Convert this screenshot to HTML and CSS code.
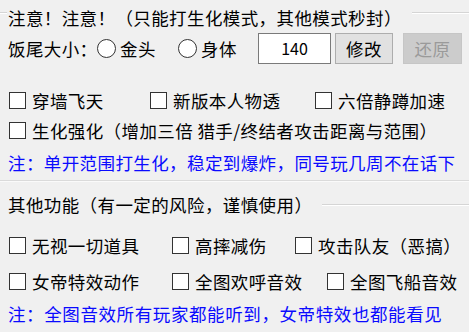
FILE: index.html
```html
<!DOCTYPE html>
<html lang="zh">
<head>
<meta charset="utf-8">
<link rel="stylesheet" href="styles.css">
</head>
<body>
<div class="panel">
  <div class="group-title first">
    <i class="rule stub"></i>
    <span class="title-text">注意！注意！（只能打生化模式，其他模式秒封）</span>
    <i class="rule grow"></i>
  </div>

  <div class="row size-row">
    <span class="label">饭尾大小：</span>
    <label class="radio r1"><span class="circle"></span>金头</label>
    <label class="radio r2"><span class="circle"></span>身体</label>
    <div class="input">140</div>
    <div class="btn">修改</div>
    <div class="btn disabled">还原</div>
  </div>

  <div class="row grid cols-a gap-top">
    <label class="check"><span class="box"></span>穿墙飞天</label>
    <label class="check"><span class="box"></span>新版本人物透</label>
    <label class="check"><span class="box"></span>六倍静蹲加速</label>
  </div>
  <div class="row">
    <label class="check"><span class="box"></span>生化强化（增加三倍 猎手/终结者攻击距离与范围）</label>
  </div>
  <div class="row note note-one">注：单开范围打生化，稳定到爆炸，同号玩几周不在话下</div>

  <div class="separator"></div>

  <div class="group-title second">
    <span class="title-text">其他功能（有一定的风险，谨慎使用）</span>
    <i class="rule grow"></i>
  </div>

  <div class="row grid cols-b gap-mid">
    <label class="check"><span class="box"></span>无视一切道具</label>
    <label class="check"><span class="box"></span>高摔减伤</label>
    <label class="check"><span class="box"></span>攻击队友（恶搞）</label>
  </div>
  <div class="row grid cols-c gap-mid2">
    <label class="check"><span class="box"></span>女帝特效动作</label>
    <label class="check"><span class="box"></span>全图欢呼音效</label>
    <label class="check"><span class="box"></span>全图飞船音效</label>
  </div>
  <div class="row note note-two">注：全图音效所有玩家都能听到，女帝特效也都能看见</div>
</div>
</body>
</html>
```

FILE: styles.css
```css
* { box-sizing: border-box; }
html, body {
  margin: 0;
  padding: 0;
  background: #f0f0f0;
}
body {
  width: 469px;
  height: 332px;
  overflow: hidden;
  font-family: "Noto Sans CJK SC", "Microsoft YaHei", sans-serif;
  font-size: 17.5px;
  letter-spacing: 0.4px;
  color: #000;
}
.panel {
  display: flex;
  flex-direction: column;
  padding-top: 3px;
}
.group-title {
  display: flex;
  align-items: flex-start;
  height: 30px;
  line-height: 30px;
}
.title-text { white-space: nowrap; padding-left: 8px; padding-right: 10px; }
.group-title.first .title-text { padding-left: 1px; }
.rule {
  display: block;
  margin-top: 9px;
  height: 2px;
  border-top: 1px solid #d5d5d5;
  border-bottom: 1px solid #ffffff;
}
.rule.stub { width: 7px; }
.rule.grow { flex: 1; }
.group-title.second .rule { margin-top: 14px; }

.row {
  display: flex;
  align-items: center;
  height: 30px;
  padding-left: 9px;
  white-space: nowrap;
}
.size-row {
  height: 31px;
  padding-left: 8px;
}
.label { width: 89px; }
.radio {
  display: flex;
  align-items: center;
}
.r1 { width: 81px; }
.r2 { width: 80px; }
.circle {
  width: 19px;
  height: 19px;
  border: 1px solid #333;
  border-radius: 50%;
  background: #fff;
  margin-right: 4px;
}
.input {
  width: 73px;
  height: 31px;
  border: 1px solid #7a7a7a;
  background: #fff;
  text-align: center;
  line-height: 29px;
  font-size: 16px;
  letter-spacing: 0;
}
.btn {
  width: 58px;
  height: 31px;
  margin-left: 4px;
  border: 1px solid #adadad;
  background: #e1e1e1;
  text-align: center;
  line-height: 29px;
}
.btn.disabled {
  margin-left: 10px;
  width: 59px;
  border-color: #c6c6c6;
  background: #cccccc;
  color: #9a9a9a;
}

.grid { display: grid; }
.cols-a { grid-template-columns: 141px 165px auto; }
.cols-b { grid-template-columns: 163px 123px auto; }
.cols-c { grid-template-columns: 163px 155px auto; }
.gap-top { margin-top: 21px; }
.gap-mid { margin-top: 10px; }
.gap-mid2 { margin-top: 6px; }

.check {
  display: flex;
  align-items: center;
}
.box {
  width: 17px;
  height: 17px;
  border: 1px solid #333;
  background: #fff;
  margin-right: 6px;
  flex: none;
}
.note {
  color: #0a0aff;
  padding-left: 8px;
  letter-spacing: 0.4px;
}
.note-one { margin-top: 2px; }
.note-two { margin-top: 2px; letter-spacing: 0.6px; }
.separator {
  height: 2px;
  margin-top: 3px;
  border-top: 1px solid #dadada;
  border-bottom: 1px solid #fafafa;
}
.group-title.second { margin-top: 8px; }
```
